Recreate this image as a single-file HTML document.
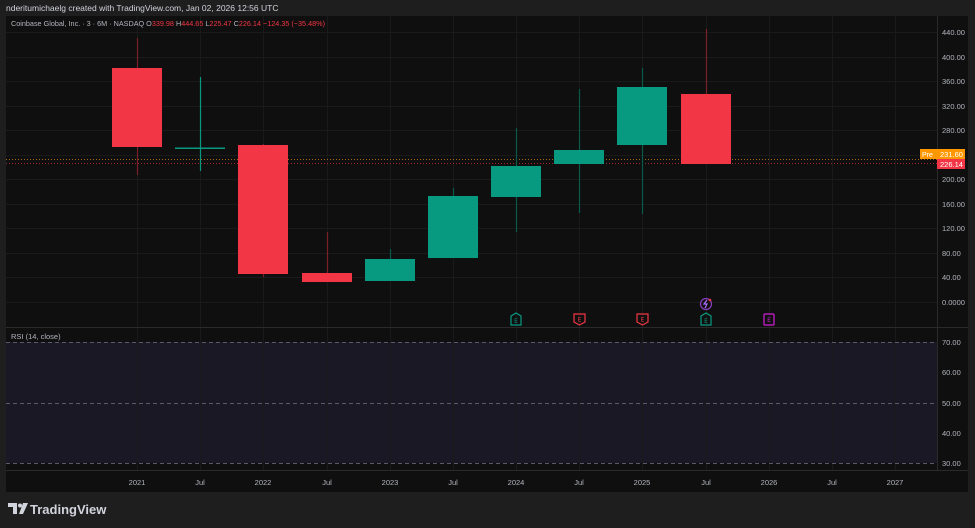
<!DOCTYPE html>
<html><head><meta charset="utf-8"><style>
html,body{margin:0;padding:0;background:#1e1e1e;width:975px;height:528px;overflow:hidden;font-family:"Liberation Sans",sans-serif}
</style></head><body>
<svg width="975" height="528" xmlns="http://www.w3.org/2000/svg" style="position:absolute;left:0;top:0">
<rect x="0" y="0" width="975" height="528" fill="#1e1e1e"/>
<text x="6" y="11" fill="#d1d4dc" font-size="8.5">nderitumichaelg created with TradingView.com, Jan 02, 2026 12:56 UTC</text>
<rect x="6" y="16" width="962" height="476" fill="#0f0f0f"/>
<rect x="6" y="342" width="931" height="121" fill="#1a1825"/>
<g stroke="#1a1a1a" stroke-width="1">
<line x1="6" x2="937" y1="32.5" y2="32.5"/><line x1="6" x2="937" y1="57.5" y2="57.5"/><line x1="6" x2="937" y1="81.5" y2="81.5"/><line x1="6" x2="937" y1="106.5" y2="106.5"/><line x1="6" x2="937" y1="130.5" y2="130.5"/><line x1="6" x2="937" y1="155.5" y2="155.5"/><line x1="6" x2="937" y1="179.5" y2="179.5"/><line x1="6" x2="937" y1="204.5" y2="204.5"/><line x1="6" x2="937" y1="228.5" y2="228.5"/><line x1="6" x2="937" y1="253.5" y2="253.5"/><line x1="6" x2="937" y1="277.5" y2="277.5"/><line x1="6" x2="937" y1="302.5" y2="302.5"/>
<line x1="137.5" x2="137.5" y1="16" y2="470"/><line x1="200.5" x2="200.5" y1="16" y2="470"/><line x1="263.5" x2="263.5" y1="16" y2="470"/><line x1="327.5" x2="327.5" y1="16" y2="470"/><line x1="390.5" x2="390.5" y1="16" y2="470"/><line x1="453.5" x2="453.5" y1="16" y2="470"/><line x1="516.5" x2="516.5" y1="16" y2="470"/><line x1="579.5" x2="579.5" y1="16" y2="470"/><line x1="642.5" x2="642.5" y1="16" y2="470"/><line x1="706.5" x2="706.5" y1="16" y2="470"/><line x1="769.5" x2="769.5" y1="16" y2="470"/><line x1="832.5" x2="832.5" y1="16" y2="470"/><line x1="895.5" x2="895.5" y1="16" y2="470"/>
</g>
<line x1="6" x2="968" y1="327.5" y2="327.5" stroke="#2a2a2a"/>
<line x1="6" x2="968" y1="470.5" y2="470.5" stroke="#2a2a2a"/>
<line x1="937.5" x2="937.5" y1="16" y2="470" stroke="#2a2a2a"/>
<g stroke="#5a5a66" stroke-dasharray="4 3"><line x1="6" x2="937" y1="342.5" y2="342.5"/><line x1="6" x2="937" y1="403.5" y2="403.5"/><line x1="6" x2="937" y1="463.5" y2="463.5"/></g>
<line x1="6" x2="937" y1="159.5" y2="159.5" stroke="#a86a10" stroke-dasharray="1 2"/>
<line x1="6" x2="937" y1="163.5" y2="163.5" stroke="#a0262f" stroke-dasharray="1 2"/>
<g stroke-width="1.2">
<line x1="137.5" x2="137.5" y1="38" y2="175" stroke="#7a2028"/>
<line x1="200.5" x2="200.5" y1="77" y2="171" stroke="#089981"/>
<line x1="263.5" x2="263.5" y1="144" y2="277" stroke="#7a2028"/>
<line x1="327.5" x2="327.5" y1="232" y2="282" stroke="#7a2028"/>
<line x1="390.5" x2="390.5" y1="249" y2="281" stroke="#0a5a4c"/>
<line x1="453.5" x2="453.5" y1="188" y2="258" stroke="#0a5a4c"/>
<line x1="516.5" x2="516.5" y1="128" y2="232" stroke="#0a5a4c"/>
<line x1="579.5" x2="579.5" y1="89" y2="213" stroke="#0a5a4c"/>
<line x1="642.5" x2="642.5" y1="68" y2="214" stroke="#0a5a4c"/>
<line x1="706.5" x2="706.5" y1="29" y2="164" stroke="#7a2028"/>
</g>
<rect x="112" y="68" width="50" height="79" fill="#f23645"/>
<rect x="175" y="147.5" width="50" height="1.5" fill="#089981"/>
<rect x="238" y="145" width="50" height="129" fill="#f23645"/>
<rect x="302" y="273" width="50" height="9" fill="#f23645"/>
<rect x="365" y="259" width="50" height="22" fill="#089981"/>
<rect x="428" y="196" width="50" height="62" fill="#089981"/>
<rect x="491" y="166" width="50" height="31" fill="#089981"/>
<rect x="554" y="150" width="50" height="14" fill="#089981"/>
<rect x="617" y="87" width="50" height="58" fill="#089981"/>
<rect x="681" y="94" width="50" height="70" fill="#f23645"/>
<g font-size="6" font-family="Liberation Mono,monospace" text-anchor="middle" fill="none" stroke-width="1.2">
<path d="M511 316 l5 -3 l5 3 v9 h-10 z" stroke="#089981"/><text x="516" y="323" fill="#089981" stroke="none">E</text>
<path d="M574 314 h11 v8 l-5.5 3 l-5.5 -3 z" stroke="#f23645"/><text x="579.5" y="321.5" fill="#f23645" stroke="none">E</text>
<path d="M637 314 h11 v8 l-5.5 3 l-5.5 -3 z" stroke="#f23645"/><text x="642.5" y="321.5" fill="#f23645" stroke="none">E</text>
<path d="M701 316 l5 -3 l5 3 v9 h-10 z" stroke="#089981"/><text x="706" y="323" fill="#089981" stroke="none">E</text>
<rect x="764" y="314" width="10" height="11" rx="1" stroke="#d11ed8"/><text x="769" y="322" fill="#d11ed8" stroke="none">E</text>
<circle cx="706" cy="304" r="5.5" stroke="#8b3fc0"/><path d="M707 300 l-3 4 h3 l-2 4" stroke="#b06bff"/><circle cx="710" cy="300" r="1.3" fill="#f23645" stroke="none"/>
</g>
<text x="11" y="26" font-size="7.5" fill="#b2b5be" textLength="314" lengthAdjust="spacingAndGlyphs">Coinbase Global, Inc. · 3 · 6M · NASDAQ <tspan>O</tspan><tspan fill="#f23645">339.98</tspan> <tspan>H</tspan><tspan fill="#f23645">444.65</tspan> <tspan>L</tspan><tspan fill="#f23645">225.47</tspan> <tspan>C</tspan><tspan fill="#f23645">226.14</tspan> <tspan fill="#f23645">−124.35 (−35.48%)</tspan></text>
<text x="11" y="339" font-size="7.5" fill="#b2b5be">RSI (14, close)</text>
<g font-size="7.5" fill="#b2b5be">
<text x="942" y="35">440.00</text><text x="942" y="60">400.00</text><text x="942" y="84">360.00</text><text x="942" y="109">320.00</text><text x="942" y="133">280.00</text><text x="942" y="182">200.00</text><text x="942" y="207">160.00</text><text x="942" y="231">120.00</text><text x="942" y="256">80.00</text><text x="942" y="280">40.00</text><text x="942" y="305">0.0000</text>
<text x="942" y="345">70.00</text><text x="942" y="375">60.00</text><text x="942" y="406">50.00</text><text x="942" y="436">40.00</text><text x="942" y="466">30.00</text>
</g>
<rect x="920" y="149" width="17" height="10" fill="#ff9800"/><text x="922" y="157" font-size="7" fill="#fff">Pre</text>
<rect x="937" y="149" width="28" height="10" fill="#ff9800"/><text x="940" y="157" font-size="7.5" fill="#fff">231.60</text>
<rect x="937" y="159" width="28" height="10" fill="#f23645"/><text x="940" y="167" font-size="7.5" fill="#fff">226.14</text>
<g font-size="7.5" fill="#b2b5be" text-anchor="middle">
<text x="137" y="485">2021</text><text x="200" y="485">Jul</text><text x="263" y="485">2022</text><text x="327" y="485">Jul</text><text x="390" y="485">2023</text><text x="453" y="485">Jul</text><text x="516" y="485">2024</text><text x="579" y="485">Jul</text><text x="642" y="485">2025</text><text x="706" y="485">Jul</text><text x="769" y="485">2026</text><text x="832" y="485">Jul</text><text x="895" y="485">2027</text>
</g>
<g fill="#d1d4dc"><path d="M8 503 h9 v11 h-4 v-7 h-5 z"/><circle cx="20" cy="505.5" r="2"/><path d="M23 503 h5 l-5 11 h-4 z"/></g>
<text x="30" y="514" font-size="13" font-weight="bold" fill="#d1d4dc">TradingView</text>
</svg>
</body></html>
